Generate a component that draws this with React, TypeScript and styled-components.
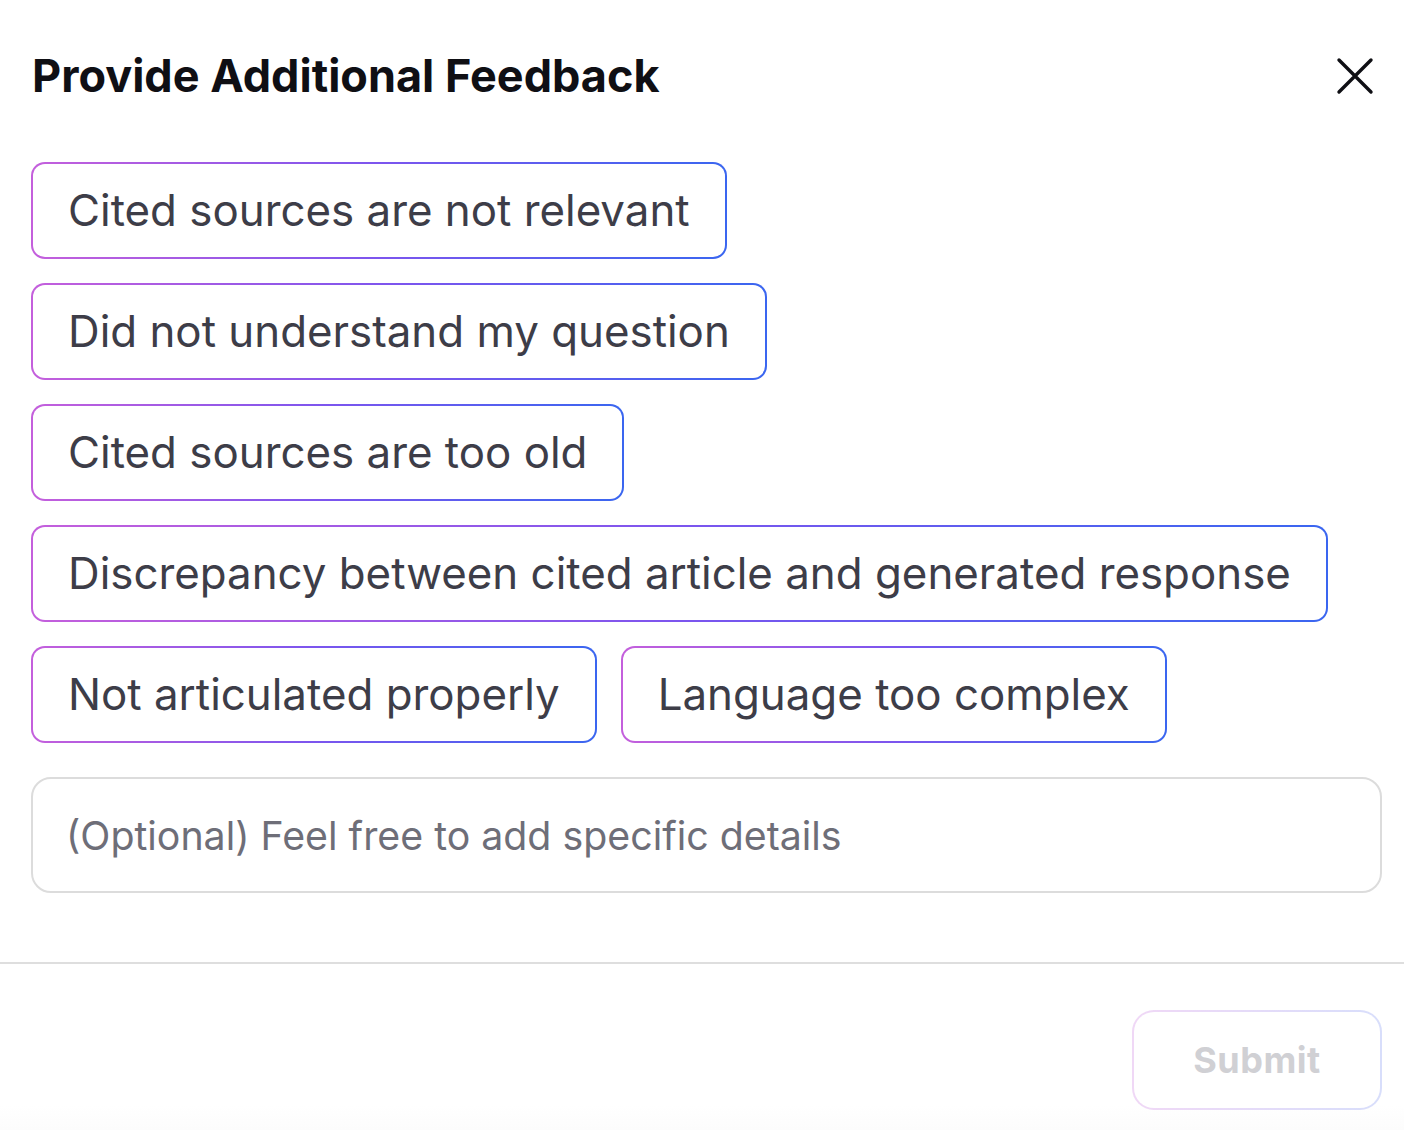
import { useState } from "react";
import styled, { createGlobalStyle } from "styled-components";

const reasons = [
  ["Cited sources are not relevant"],
  ["Did not understand my question"],
  ["Cited sources are too old"],
  ["Discrepancy between cited article and generated response"],
  ["Not articulated properly", "Language too complex"],
];

const GRADIENT = "linear-gradient(90deg, #c45fdc 0%, #7c55ee 50%, #3a66f0 100%)";

const GlobalStyle = createGlobalStyle`
  html, body {
    margin: 0;
    background: #ffffff;
  }
  body {
    font-family: Inter, "Noto Sans", sans-serif;
  }
`;

const Dialog = styled.div`
  width: 1404px;
  height: 1130px;
  display: flex;
  flex-direction: column;
  background: #ffffff;
  color: #0f0f14;
`;

const Header = styled.header`
  display: flex;
  align-items: center;
  justify-content: space-between;
  padding: 50px 27px 0 32px;
`;

const Title = styled.h1`
  margin: 0;
  font-size: 45px;
  font-weight: 700;
  line-height: 52px;
  letter-spacing: 0;
`;

const CloseButton = styled.button`
  width: 44px;
  height: 44px;
  display: grid;
  place-items: center;
  padding: 0;
  border: 0;
  background: transparent;
  cursor: pointer;
`;

const Body = styled.div`
  display: flex;
  flex-direction: column;
  gap: 24px;
  padding: 60px 22px 69px 31px;
  border-bottom: 2px solid #dedede;
`;

const ChipRow = styled.div`
  display: flex;
  gap: 24px;
`;

const Chip = styled.button<{ $selected: boolean }>`
  height: 97px;
  padding: 0 35px;
  border: 2px solid transparent;
  border-radius: 14px;
  background:
    linear-gradient(${({ $selected }) => ($selected ? "#f3efff" : "#ffffff")}, ${({ $selected }) => ($selected ? "#f3efff" : "#ffffff")}) padding-box,
    ${GRADIENT} border-box;
  color: #3d3d48;
  font: 400 43.85px/1 Inter, "Noto Sans", sans-serif;
  white-space: nowrap;
  cursor: pointer;
`;

const Details = styled.input`
  height: 112px;
  margin-top: 10px;
  padding: 0 33px;
  border: 2px solid #dcdcdc;
  border-radius: 20px;
  background: #ffffff;
  color: #3d3d48;
  font: 400 39.3px/1 Inter, "Noto Sans", sans-serif;
  outline: none;

  &::placeholder {
    color: #6e6e78;
  }
`;

const Footer = styled.footer`
  flex: 1;
  display: flex;
  justify-content: flex-end;
  align-items: flex-start;
  padding: 46px 22px 0;
  background: linear-gradient(#ffffff 85%, #fcfcfc);
`;

const Submit = styled.button`
  width: 250px;
  height: 100px;
  border: 2px solid transparent;
  border-radius: 22px;
  background:
    linear-gradient(#ffffff, #ffffff) padding-box,
    linear-gradient(90deg, #f0d8f6, #d8defb) border-box;
  color: #d0d0d4;
  font: 700 36px/1 Inter, "Noto Sans", sans-serif;
  letter-spacing: 0.5px;
`;

export default function App() {
  const [selected, setSelected] = useState<string[]>([]);
  const [details, setDetails] = useState("");

  function toggle(reason: string) {
    setSelected((current) =>
      current.includes(reason) ? current.filter((r) => r !== reason) : [...current, reason],
    );
  }

  return (
    <>
      <GlobalStyle />
      <Dialog role="dialog" aria-label="Provide Additional Feedback">
        <Header>
          <Title>Provide Additional Feedback</Title>
          <CloseButton type="button" aria-label="Close">
            <svg width="38" height="38" viewBox="0 0 38 38" fill="none" stroke="#0f0f14" strokeWidth="3.4" strokeLinecap="round">
              <path d="M3 3 L35 35 M35 3 L3 35" />
            </svg>
          </CloseButton>
        </Header>
        <Body>
          {reasons.map((row) => (
            <ChipRow key={row[0]}>
              {row.map((reason) => (
                <Chip key={reason} type="button" $selected={selected.includes(reason)} onClick={() => toggle(reason)}>
                  {reason}
                </Chip>
              ))}
            </ChipRow>
          ))}
          <Details
            placeholder="(Optional) Feel free to add specific details"
            value={details}
            onChange={(e) => setDetails(e.target.value)}
          />
        </Body>
        <Footer>
          <Submit type="button" disabled={selected.length === 0 && !details}>
            Submit
          </Submit>
        </Footer>
      </Dialog>
    </>
  );
}
